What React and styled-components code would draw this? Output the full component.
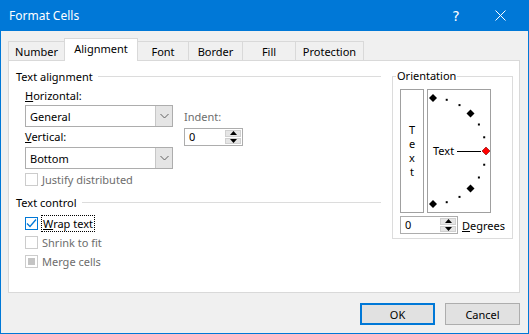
import React from 'react';
import styled, { createGlobalStyle } from 'styled-components';

const GlobalStyle = createGlobalStyle`
  body {
    margin: 0;
    background: #ffffff;
    font-family: "Segoe UI", "Noto Sans", sans-serif;
    font-size: 11px;
  }
`;

const Window = styled.div`
  width: 529px;
  height: 334px;
  box-sizing: border-box;
  border: 1px solid #0078d7;
  border-top: none;
  background: #f0f0f0;
  display: flex;
  flex-direction: column;
`;

const TitleBar = styled.div`
  height: 31px;
  background: #0078d7;
  color: #ffffff;
  display: flex;
  align-items: center;
  padding: 0 7px 0 9px;
  margin: 0 -1px;
`;

const Title = styled.div`
  flex: 1;
  font-size: 12px;
  margin-top: -1px;
`;

const TitleButton = styled.div`
  width: 44px;
  height: 31px;
  display: flex;
  align-items: center;
  justify-content: center;
  font-size: 14px;
  font-family: "DejaVu Sans", sans-serif;
`;

const Body = styled.div`
  flex: 1;
  padding: 7px 8px 0 7px;
  display: flex;
  flex-direction: column;
`;

const TabStrip = styled.div`
  height: 23px;
  display: flex;
  align-items: flex-end;
  position: relative;
  z-index: 1;
  margin-bottom: -1px;
`;

const Tab = styled.div`
  width: ${({ $w }) => $w}px;
  height: ${({ $active }) => ($active ? 23 : 20)}px;
  box-sizing: border-box;
  border: 1px solid #d9d9d9;
  border-bottom: ${({ $active }) => ($active ? 'none' : '1px solid #d9d9d9')};
  background: ${({ $active }) => ($active ? '#ffffff' : '#f0f0f0')};
  margin-left: -1px;
  display: flex;
  align-items: center;
  justify-content: center;
  padding-bottom: ${({ $active }) => ($active ? 3 : 0)}px;
  color: #000;
  &:first-child {
    margin-left: 0;
  }
`;

const Panel = styled.div`
  height: 233px;
  box-sizing: border-box;
  background: #ffffff;
  border: 1px solid #d9d9d9;
  padding: 7px 6px 7px 7px;
  display: flex;
  gap: 11px;
`;

const LeftColumn = styled.div`
  width: 365px;
  flex-shrink: 0;
  display: flex;
  flex-direction: column;
`;

const GroupHeader = styled.div`
  height: 16px;
  display: flex;
  align-items: center;
  gap: 5px;
  margin-top: ${({ $top }) => $top || 0}px;
  &::after {
    content: '';
    flex: 1;
    height: 1px;
    background: #dcdcdc;
  }
`;

const Indented = styled.div`
  padding-left: 9px;
  display: flex;
  flex-direction: column;
`;

const AlignGrid = styled.div`
  display: flex;
  gap: 11px;
  margin-top: 4px;
`;

const FieldColumn = styled.div`
  display: flex;
  flex-direction: column;
`;

const Label = styled.div`
  height: 16px;
  line-height: 16px;
  color: ${({ $disabled }) => ($disabled ? '#6d6d6d' : '#000000')};
  margin-top: ${({ $top }) => $top || 0}px;
  margin-bottom: ${({ $bottom }) => $bottom || 0}px;
`;

const Select = styled.div`
  width: 148px;
  height: ${({ $h }) => $h}px;
  box-sizing: border-box;
  border: 1px solid #adadad;
  background: #ffffff;
  display: flex;
  align-items: center;
`;

const SelectValue = styled.div`
  flex: 1;
  padding-left: 4px;
`;

const SelectArrow = styled.div`
  width: 16px;
  align-self: stretch;
  background: #e5e5e5;
  border-left: 1px solid #c7c7c7;
  display: flex;
  align-items: center;
  justify-content: center;
`;

const Spin = styled.div`
  width: ${({ $w }) => $w}px;
  height: 18px;
  box-sizing: border-box;
  border: 1px solid #adadad;
  background: #ffffff;
  display: flex;
`;

const SpinValue = styled.div`
  flex: 1;
  padding-left: 4px;
  line-height: 16px;
`;

const SpinButtons = styled.div`
  width: 16px;
  display: flex;
  flex-direction: column;
  gap: 1px;
  padding: 1px 1px 1px 0;
`;

const SpinButton = styled.div`
  flex: 1;
  background: #e5e5e5;
  border: 1px solid #d0d0d0;
  display: flex;
  align-items: center;
  justify-content: center;
`;

const CheckRow = styled.div`
  height: 16px;
  display: flex;
  align-items: center;
  gap: 4px;
  margin-top: ${({ $top }) => $top || 0}px;
  color: ${({ $disabled }) => ($disabled ? '#6d6d6d' : '#000000')};
`;

const Box = styled.div`
  width: 13px;
  height: 13px;
  box-sizing: border-box;
  border: 1px solid ${({ $color }) => $color};
  background: #ffffff;
  display: flex;
  align-items: center;
  justify-content: center;
`;

const MixedMark = styled.div`
  width: 7px;
  height: 7px;
  background: #c4c4c4;
`;

const FocusText = styled.span`
  outline: 1px dotted #000000;
  padding: 0 1px;
  line-height: 15px;
`;

const Orientation = styled.fieldset`
  margin: 0;
  width: 121px;
  height: 171px;
  flex-shrink: 0;
  box-sizing: border-box;
  border: 1px solid #dcdcdc;
  padding: 0 7px 4px 7px;
  display: flex;
  flex-direction: column;
`;

const Legend = styled.legend`
  padding: 0 1px;
  margin-left: -4px;
  line-height: 16px;
`;

const OrientRow = styled.div`
  display: flex;
  gap: 3px;
  margin-top: 5px;
`;

const StackedBox = styled.div`
  width: 24px;
  height: 124px;
  box-sizing: border-box;
  border: 1px solid #a0a0a0;
  display: flex;
  flex-direction: column;
  align-items: center;
  justify-content: center;
  line-height: 14px;
`;

const Dial = styled.div`
  position: relative;
  width: 64px;
  height: 124px;
  box-sizing: border-box;
  border: 1px solid #a0a0a0;
`;

const DialLabel = styled.span`
  position: absolute;
  left: 5px;
  top: 53px;
  line-height: 16px;
`;

const DegreesRow = styled.div`
  display: flex;
  align-items: center;
  gap: 4px;
  margin-top: 3px;
`;

const Footer = styled.div`
  display: flex;
  justify-content: flex-end;
  gap: 10px;
  margin-top: 10px;
`;

const Button = styled.div`
  width: 75px;
  height: 22px;
  box-sizing: border-box;
  background: #e1e1e1;
  border: ${({ $primary }) => ($primary ? '2px solid #0078d7' : '1px solid #adadad')};
  display: flex;
  align-items: center;
  justify-content: center;
`;

const Chevron = () => (
  <svg width="9" height="6" viewBox="0 0 9 6">
    <path d="M0.5 1 L4.5 5 L8.5 1" fill="none" stroke="#606060" strokeWidth="1" />
  </svg>
);

const Up = () => (
  <svg width="7" height="4" viewBox="0 0 7 4">
    <path d="M3.5 0 L7 4 L0 4 Z" fill="#000" />
  </svg>
);

const Down = () => (
  <svg width="7" height="4" viewBox="0 0 7 4">
    <path d="M0 0 L7 0 L3.5 4 Z" fill="#000" />
  </svg>
);

const Check = () => (
  <svg width="11" height="11" viewBox="0 0 11 11">
    <path d="M1 5.5 L4 8.5 L10 1.5" fill="none" stroke="#0078d7" strokeWidth="1.3" />
  </svg>
);

const SpinBox = ({ width }) => (
  <Spin $w={width}>
    <SpinValue>0</SpinValue>
    <SpinButtons>
      <SpinButton><Up /></SpinButton>
      <SpinButton><Down /></SpinButton>
    </SpinButtons>
  </Spin>
);

const DialDrawing = () => {
  const cx = 5;
  const cy = 61;
  const r = 53;
  const marks = [];
  for (let a = 90; a >= -90; a -= 15) {
    const rad = (a * Math.PI) / 180;
    const x = cx + r * Math.cos(rad);
    const y = cy - r * Math.sin(rad);
    if (a === 0) {
      marks.push(
        <path key={a} d={`M${x} ${y - 4} L${x + 4} ${y} L${x} ${y + 4} L${x - 4} ${y} Z`} fill="#ff0000" stroke="#7a0000" strokeWidth="0.6" />
      );
    } else if (a % 45 === 0) {
      marks.push(<path key={a} d={`M${x} ${y - 4} L${x + 4} ${y} L${x} ${y + 4} L${x - 4} ${y} Z`} fill="#000" />);
    } else {
      marks.push(<rect key={a} x={x - 1} y={y - 1} width="2" height="2" fill="#000" />);
    }
  }
  return (
    <svg width="62" height="122" viewBox="0 0 62 122" style={{ display: 'block' }}>
      <line x1="29" y1={cy + 0.5} x2="53" y2={cy + 0.5} stroke="#000" strokeWidth="1" />
      {marks}
    </svg>
  );
};

const tabs = [
  ['Number', 57],
  ['Alignment', 74],
  ['Font', 52],
  ['Border', 55],
  ['Fill', 54],
  ['Protection', 69],
];

const App = () => {
  return (
    <>
      <GlobalStyle />
      <Window>
        <TitleBar>
          <Title>Format Cells</Title>
          <TitleButton>?</TitleButton>
          <TitleButton>
            <svg width="11" height="11" viewBox="0 0 11 11">
              <path d="M0.5 0.5 L10.5 10.5 M10.5 0.5 L0.5 10.5" stroke="#fff" strokeWidth="1" />
            </svg>
          </TitleButton>
        </TitleBar>
        <Body>
          <TabStrip>
            {tabs.map(([name, w]) => (
              <Tab key={name} $w={w} $active={name === 'Alignment'}>
                {name}
              </Tab>
            ))}
          </TabStrip>
          <Panel>
            <LeftColumn>
              <GroupHeader>Text alignment</GroupHeader>
              <Indented>
                <AlignGrid>
                  <FieldColumn>
                    <Label $bottom={1}>
                      <u>H</u>orizontal:
                    </Label>
                    <Select $h={22}>
                      <SelectValue>General</SelectValue>
                      <SelectArrow><Chevron /></SelectArrow>
                    </Select>
                    <Label $top={2} $bottom={2}>
                      <u>V</u>ertical:
                    </Label>
                    <Select $h={22}>
                      <SelectValue>Bottom</SelectValue>
                      <SelectArrow><Chevron /></SelectArrow>
                    </Select>
                  </FieldColumn>
                  <FieldColumn>
                    <Label $disabled $top={21} $bottom={3}>Indent:</Label>
                    <SpinBox width={59} />
                  </FieldColumn>
                </AlignGrid>
                <CheckRow $disabled $top={2}>
                  <Box $color="#cccccc" />
                  Justify distributed
                </CheckRow>
              </Indented>
              <GroupHeader $top={7}>Text control</GroupHeader>
              <Indented>
                <CheckRow $top={5}>
                  <Box $color="#0078d7"><Check /></Box>
                  <FocusText>
                    <u>W</u>rap text
                  </FocusText>
                </CheckRow>
                <CheckRow $disabled $top={3}>
                  <Box $color="#cccccc" />
                  Shrink to fit
                </CheckRow>
                <CheckRow $disabled $top={3}>
                  <Box $color="#cccccc"><MixedMark /></Box>
                  Merge cells
                </CheckRow>
              </Indented>
            </LeftColumn>
            <Orientation>
              <Legend>Orientation</Legend>
              <OrientRow>
                <StackedBox>
                  <span>T</span>
                  <span>e</span>
                  <span>x</span>
                  <span>t</span>
                </StackedBox>
                <Dial>
                  <DialDrawing />
                  <DialLabel>Text</DialLabel>
                </Dial>
              </OrientRow>
              <DegreesRow>
                <SpinBox width={58} />
                <span>
                  <u>D</u>egrees
                </span>
              </DegreesRow>
            </Orientation>
          </Panel>
          <Footer>
            <Button $primary>OK</Button>
            <Button>Cancel</Button>
          </Footer>
        </Body>
      </Window>
    </>
  );
};

export default App;
